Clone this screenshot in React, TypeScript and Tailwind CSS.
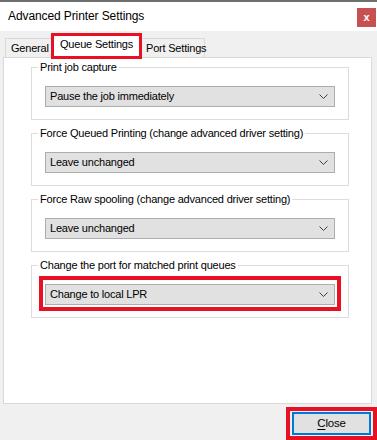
import React from "react";

const groups = [
  { label: "Print job capture", value: "Pause the job immediately" },
  { label: "Force Queued Printing (change advanced driver setting)", value: "Leave unchanged" },
  { label: "Force Raw spooling (change advanced driver setting)", value: "Leave unchanged" },
  { label: "Change the port for matched print queues", value: "Change to local LPR", marked: true },
];

function Combo({ value }: { value: string }) {
  return (
    <div className="flex h-[21px] items-center justify-between border border-[#adadad] bg-[#e1e1e1] pl-[4px] pr-[6px]">
      <span className="whitespace-nowrap leading-none">{value}</span>
      <svg width="9" height="5" viewBox="0 0 9 5" className="text-[#404040]">
        <polyline points="0.5,0.5 4.5,4.5 8.5,0.5" fill="none" stroke="currentColor" strokeWidth="1" />
      </svg>
    </div>
  );
}

export default function App() {
  return (
    <div
      className="flex h-[440px] w-[377px] flex-col bg-[#f0f0f0] text-[11px] tracking-[-0.2px] text-black"
      style={{ fontFamily: '"Segoe UI", "Liberation Sans", Arial, sans-serif' }}
    >
      <div className="h-[2px] bg-[#6e6e6e]" />

      {/* title bar */}
      <div className="flex h-[29px] items-start justify-between bg-white pl-[8px] pt-[6px]">
        <span className="whitespace-nowrap text-[12px] leading-[16px] tracking-[-0.1px]">Advanced Printer Settings</span>
        <div className="mr-[1px] flex h-[19px] w-[19px] items-center justify-center bg-[#c75050] text-[11px] font-bold leading-none text-white">
          x
        </div>
      </div>

      {/* tabs */}
      <div className="flex h-[26px] items-end pl-[5px]">
        <div className="flex h-[19px] w-[46px] items-center whitespace-nowrap border-l border-t border-[#d9d9d9] pl-[5px]">
          General
        </div>
        <div className="relative z-10 -mb-[2px] flex h-[26px] w-[91px] items-center whitespace-nowrap border-[3px] border-[#e81123] bg-white pb-[3px] pl-[6px]">
          Queue Settings
        </div>
        <div className="flex h-[19px] w-[63px] items-center whitespace-nowrap border-r border-t border-[#d9d9d9] pl-[4px]">
          Port Settings
        </div>
      </div>

      {/* panel */}
      <div className="ml-[3px] mr-[5px] flex h-[347px] flex-col gap-[5px] border border-[#d9d9d9] bg-white pl-[27px] pr-[22px] pt-[1px]">
        {groups.map((g) => (
          <fieldset key={g.label} className="min-w-0 border border-[#dcdcdc] px-[13px] pb-[12px]">
            <legend className="-ml-[7px] whitespace-nowrap px-[2px] leading-[16px]">{g.label}</legend>
            <div className="relative mt-[11px]">
              {g.marked && (
                <div className="pointer-events-none absolute -bottom-[6px] -left-[6px] -right-[6px] -top-[8px] border-[4px] border-[#e81123]" />
              )}
              <Combo value={g.value} />
            </div>
          </fieldset>
        ))}
      </div>

      {/* footer */}
      <div className="flex justify-end pt-[3px]">
        <div className="border-[4px] border-[#e81123] px-[2px] py-[1px]">
          <button className="flex h-[23px] w-[79px] items-center justify-center border-2 border-[#0078d7] bg-[#e1e1e1] text-[11.5px] leading-none">
            <span>
              <span className="underline underline-offset-2">C</span>lose
            </span>
          </button>
        </div>
      </div>
    </div>
  );
}
